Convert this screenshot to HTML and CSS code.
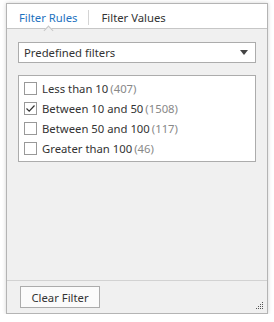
FILE: index.html
```html
<!DOCTYPE html>
<html>
<head>
<meta charset="utf-8">
<link rel="stylesheet" href="styles.css">
</head>
<body>
<div class="frame">
  <div class="tabs">
    <div class="tab active">Filter Rules</div>
    <div class="tab-sep"></div>
    <div class="tab">Filter Values</div>
  </div>
  <div class="content">
    <div class="combo">
      <span class="combo-text">Predefined filters</span>
      <svg class="combo-arrow" width="8" height="5" viewBox="0 0 8 5"><path d="M0 0H8L4 5Z" fill="#444"/></svg>
    </div>
    <div class="list">
      <div class="row"><span class="cb"></span><span class="label">Less than 10</span><span class="count">(407)</span></div>
      <div class="row"><span class="cb"><svg width="11" height="11" viewBox="0 0 11 11"><path d="M1.5 5.5L4.2 8.2L9.5 2.5" fill="none" stroke="#333" stroke-width="1.2"/></svg></span><span class="label">Between 10 and 50</span><span class="count">(1508)</span></div>
      <div class="row"><span class="cb"></span><span class="label">Between 50 and 100</span><span class="count">(117)</span></div>
      <div class="row"><span class="cb"></span><span class="label">Greater than 100</span><span class="count">(46)</span></div>
    </div>
  </div>
  <div class="footer">
    <div class="button">Clear Filter</div>
    <svg class="grip" width="8" height="8" viewBox="0 0 8 8" fill="#555">
      <rect x="6" y="0" width="1" height="1"/>
      <rect x="4" y="2" width="1" height="1"/><rect x="6" y="2" width="1" height="1"/>
      <rect x="2" y="4" width="1" height="1"/><rect x="4" y="4" width="1" height="1"/><rect x="6" y="4" width="1" height="1"/>
      <rect x="0" y="6" width="1" height="1"/><rect x="2" y="6" width="1" height="1"/><rect x="4" y="6" width="1" height="1"/><rect x="6" y="6" width="1" height="1"/>
    </svg>
  </div>
</div>
</body>
</html>
```
FILE: styles.css
```css
html, body {
  margin: 0;
  padding: 0;
  background: #ffffff;
}
body {
  font-family: "Segoe UI", "Noto Sans", "Open Sans", sans-serif;
  font-size: 11.3px;
  color: #333;
}
.frame {
  margin: 3px 0 0 6px;
  width: 260px;
  height: 309px;
  border: 1px solid #b4b4b4;
  background: #f0f0f0;
  box-shadow: 0 0 4px rgba(0,0,0,0.18);
  display: flex;
  flex-direction: column;
}
.tabs {
  height: 25px;
  box-sizing: border-box;
  padding-top: 3px;
  background: #fff;
  border-bottom: 1px solid #c6c6c6;
  display: flex;
  align-items: center;
  padding-left: 12px;
  position: relative;
}
.tab {
  color: #333;
  line-height: 16px;
}
.tab.active {
  color: #1e72c0;
  position: relative;
}
.tab.active::after {
  content: "";
  position: absolute;
  left: 26px;
  top: 17px;
  width: 6px;
  height: 6px;
  background: #f0f0f0;
  border-left: 1px solid #c6c6c6;
  border-top: 1px solid #c6c6c6;
  transform: rotate(45deg);
}
.tab-sep {
  width: 1px;
  height: 15px;
  background: #d4d4d4;
  margin: 0 12px 0 11px;
}
.content {
  flex: 1;
  padding: 13px 11px 0 11px;
  display: flex;
  flex-direction: column;
  gap: 12px;
}
.combo {
  height: 19px;
  border: 1px solid #acacac;
  background: #fff;
  display: flex;
  align-items: center;
  justify-content: space-between;
  padding: 0 7px 0 5px;
}
.list {
  border: 1px solid #acacac;
  background: #fff;
  padding: 2px 0 3px 0;
}
.row {
  height: 20px;
  display: flex;
  align-items: center;
  padding-left: 5px;
}
.cb {
  width: 13px;
  height: 13px;
  border: 1px solid #999;
  background: #fff;
  box-sizing: border-box;
  margin-right: 5px;
  display: flex;
  align-items: center;
  justify-content: center;
}
.count {
  color: #888;
  margin-left: 2px;
}
.footer {
  height: 33px;
  border-top: 1px solid #d2d2d2;
  position: relative;
  padding: 5px 0 0 13px;
  box-sizing: border-box;
}
.button {
  width: 78px;
  height: 20px;
  border: 1px solid #acacac;
  background: #fbfbfb;
  display: flex;
  align-items: center;
  justify-content: center;
}
.grip {
  position: absolute;
  right: 3px;
  bottom: 3px;
}
```
